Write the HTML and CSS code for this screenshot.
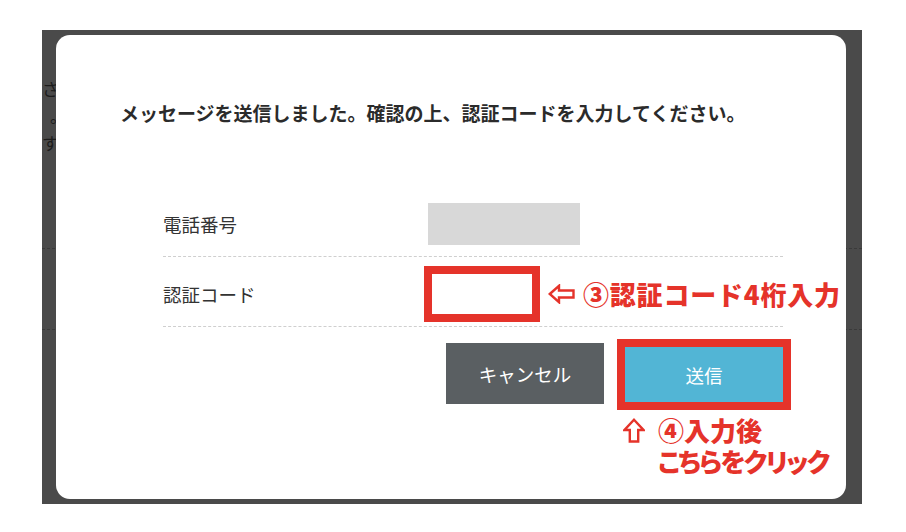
FILE: index.html
```html
<!DOCTYPE html>
<html lang="ja">
<head>
    <meta charset="UTF-8">
    <title>認証コード入力</title>
    <link rel="stylesheet" href="styles.css">
</head>
<body>
<div class="overlay">
    <div class="page-behind">
        <div class="behind-text">
            <div>さ</div>
            <div class="dot">。</div>
            <div>す</div>
        </div>
        <div class="behind-line first"></div>
        <div class="behind-line second"></div>
    </div>

    <div class="modal">
        <p class="modal-title">メッセージを送信しました。確認の上、認証コードを入力してください。</p>

        <div class="form">
            <div class="row">
                <div class="label">電話番号</div>
                <div class="value"><div class="phone"></div></div>
            </div>
            <div class="row">
                <div class="label">認証コード</div>
                <div class="value">
                    <input type="text" class="code" maxlength="4">
                    <span class="hint">
                        <svg width="27" height="20" viewBox="0 0 27 20"><path d="M1.8 10 L11 1.8 V6.5 H25.5 V13.5 H11 V18.2 Z" fill="none" stroke="#e5332a" stroke-width="2.4"/></svg>
                        <span class="hint-text">③認証コード4桁入力</span>
                    </span>
                </div>
            </div>

            <div class="actions">
                <button class="btn cancel">キャンセル</button>
                <div class="send-col">
                    <button class="btn send">送信</button>
                    <div class="note">
                        <svg width="22" height="25" viewBox="0 0 22 25"><path d="M11 1.8 L20.5 12 H15.2 V23.5 H6.8 V12 H1.5 Z" fill="none" stroke="#e5332a" stroke-width="2.4"/></svg>
                        <div class="note-text">
                            <div>④入力後</div>
                            <div class="second-line">こちらをクリック</div>
                        </div>
                    </div>
                </div>
            </div>
        </div>
    </div>
</div>
</body>
</html>
```

FILE: styles.css
```css
body {
    font-family: "Noto Sans CJK JP", "Noto Sans", sans-serif;
    background: #fff;
    margin: 0;
    padding: 30px 0 0 42px;
    color: #333;
}
.overlay {
    position: relative;
    width: 820px;
    height: 474px;
    box-sizing: border-box;
    padding: 5px 16px 5px 14px;
    background: #4a4a4a;
    display: flex;
}

/* page content seen through the dark overlay */
.page-behind {
    position: absolute;
    inset: 0;
    overflow: hidden;
}
.behind-text {
    position: absolute;
    left: 0;
    top: 45px;
    font-size: 17px;
    line-height: 27px;
    color: #1c1c1c;
}
.behind-text .dot {
    margin-left: 8px;
}
.behind-line {
    position: absolute;
    left: 0;
    right: 0;
    border-top: 1px dashed #3a3a3a;
}
.behind-line.first {
    top: 218px;
}
.behind-line.second {
    top: 299px;
}

.modal {
    position: relative;
    flex: 1;
    background: #fff;
    border-radius: 14px;
    padding: 64px 0 0 64px;
}
.modal-title {
    margin: 0;
    font-size: 19px;
    line-height: 28px;
    font-weight: bold;
    color: #2b2b2b;
    white-space: nowrap;
}

.form {
    width: 620px;
    margin: 60px 0 0 43px;
}
.row {
    display: grid;
    grid-template-columns: 265px 1fr;
    align-items: center;
    height: 70px;
    box-sizing: border-box;
    padding-top: 4px;
    border-bottom: 1px dashed #cfcfcf;
}
.label {
    font-size: 18.5px;
    color: #333;
}
.value {
    display: flex;
    align-items: center;
    white-space: nowrap;
}
.phone {
    width: 152px;
    height: 42px;
    background: #d8d8d8;
}
.code {
    width: 116px;
    height: 56px;
    box-sizing: border-box;
    margin: 0 0 0 -4px;
    border: 8px solid #e5332a;
    background: #fff;
    padding: 0;
}
.hint {
    display: flex;
    align-items: center;
    margin-left: 8px;
}
.hint-text {
    margin-left: 8px;
    font-size: 26px;
    letter-spacing: 0.8px;
    font-weight: 900;
    color: #e5332a;
}

.actions {
    display: flex;
    justify-content: flex-end;
    align-items: flex-start;
    gap: 21px;
    margin-top: 16px;
}
.btn {
    width: 158px;
    border: none;
    color: #fff;
    font-family: inherit;
    font-size: 18.5px;
    cursor: pointer;
    padding: 0;
}
.cancel {
    height: 61px;
    background: #5a5f62;
}
.send-col {
    display: flex;
    flex-direction: column;
    width: 158px;
}
.send {
    height: 55px;
    margin-top: 4px;
    background: #52b5d5;
    outline: 8px solid #e5332a;
}
.note {
    display: flex;
    align-items: flex-start;
    gap: 13px;
    margin: 12px 0 0 -2px;
    white-space: nowrap;
}
.note svg {
    flex: none;
    margin-top: 4px;
}
.note-text {
    font-size: 26px;
    line-height: 31px;
    font-weight: 900;
    color: #e5332a;
}
.note-text .second-line {
    font-feature-settings: "palt";
    letter-spacing: -1.6px;
}
```
